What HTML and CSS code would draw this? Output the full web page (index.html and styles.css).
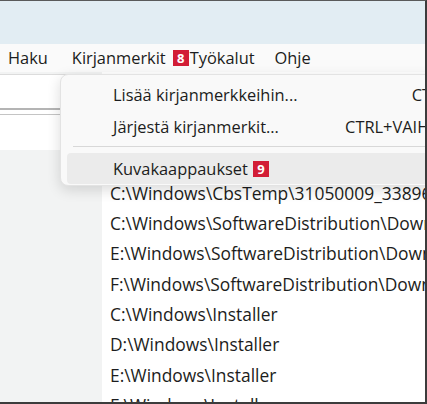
FILE: index.html
```html
<!DOCTYPE html>
<html lang="fi">
<head>
<meta charset="utf-8">
<title>Kirjanmerkit</title>
<link rel="stylesheet" href="styles.css">
</head>
<body>
<div class="window">
  <div class="titlebar"></div>
  <div class="menubar">
    <span class="menu-item">Haku</span>
    <span class="menu-item active">Kirjanmerkit</span>
    <span class="badge menu-badge">8</span>
    <span class="menu-item tools">Työkalut</span>
    <span class="menu-item help">Ohje</span>
  </div>
  <div class="main">
    <div class="side">
      <div class="field"></div>
      <div class="field-gap"></div>
      <div class="side-white"></div>
      <div class="side-gray"></div>
    </div>
    <div class="list">
      <div class="row">C:\Windows\Temp\Downloads</div>
      <div class="row">C:\Windows\Logs\CBS</div>
      <div class="row">C:\Windows\WinSxS\Backup</div>
      <div class="row">C:\Windows\CbsTemp\31050009_3389601</div>
      <div class="row">C:\Windows\SoftwareDistribution\Download</div>
      <div class="row">E:\Windows\SoftwareDistribution\Download</div>
      <div class="row">F:\Windows\SoftwareDistribution\Download</div>
      <div class="row">C:\Windows\Installer</div>
      <div class="row">D:\Windows\Installer</div>
      <div class="row">E:\Windows\Installer</div>
      <div class="row">F:\Windows\Installer</div>
    </div>
  </div>
  <div class="dropdown">
    <div class="dd-item"><span class="dd-label">Lisää kirjanmerkkeihin...</span><span class="dd-key">CTRL+D</span></div>
    <div class="dd-item"><span class="dd-label">Järjestä kirjanmerkit...</span><span class="dd-key">CTRL+VAIHTO+B</span></div>
    <div class="dd-sep"></div>
    <div class="dd-item hot"><span class="dd-label">Kuvakaappaukset</span><span class="badge">9</span></div>
  </div>
</div>
</body>
</html>
```

FILE: styles.css
```css
html, body {
  margin: 0;
  padding: 0;
}
body {
  width: 427px;
  height: 404px;
  overflow: hidden;
  font-family: "Open Sans", "Noto Sans", "Liberation Sans", sans-serif;
  color: #1c1d20;
  background: #f2f3f3;
}
.window {
  position: relative;
  width: 427px;
  height: 404px;
  border-top: 1px solid #5a5a5a;
  border-right: 2px solid #3c3c3c;
  border-bottom: 2px solid #3c3c3c;
  box-sizing: border-box;
  overflow: hidden;
  background: #f2f3f3;
}
.titlebar {
  height: 43px;
  background: #e2edf3;
}
.menubar {
  height: 28px;
  background: #fafafa;
  display: flex;
  align-items: center;
  font-size: 16.4px;
  padding-left: 8px;
}
.menu-item {
  height: 28px;
  line-height: 27px;
}
.menu-item.active {
  margin-left: 24px;
}
.menu-badge {
  margin-left: 7px;
}
.menu-item.tools {
  margin-left: 1px;
}
.menu-item.help {
  margin-left: 20px;
}
.badge {
  display: inline-block;
  flex: none;
  width: 16px;
  height: 16px;
  background: #d21d36;
  color: #fff;
  font-weight: 700;
  font-size: 13px;
  line-height: 16px;
  text-align: center;
  font-family: "Open Sans", "Liberation Sans", sans-serif;
}
.main {
  display: flex;
  height: 332px;
}
.side {
  width: 102px;
  display: flex;
  flex-direction: column;
  flex: none;
}
.field {
  height: 33px;
  background: #fff;
  border-top: 1px solid #dcdcdc;
  border-bottom: 2px solid #b4b4b4;
  margin-top: 2px;
}
.field-gap {
  height: 4px;
  background: #fff;
  border-bottom: 1px solid #c4c4c4;
}
.side-white {
  height: 35px;
  background: #fff;
}
.side-gray {
  flex: 1;
  background: #f2f3f3;
}
.list {
  flex: 1;
  background: #fff;
  padding-top: 15px;
  padding-left: 8px;
  font-size: 17.4px;
  white-space: nowrap;
  overflow: hidden;
}
.row {
  height: 30.3px;
  line-height: 30.3px;
}
.dropdown {
  position: absolute;
  left: 60px;
  top: 73px;
  width: 420px;
  height: 112px;
  background: #f9f9f9;
  border: 1px solid #e3e3e3;
  border-radius: 8px;
  box-shadow: 0 4px 14px rgba(0,0,0,0.14);
  box-sizing: border-box;
  padding: 3px 0 0 6px;
  font-size: 16.4px;
}
.dd-item {
  height: 32px;
  display: flex;
  align-items: center;
  padding-left: 46px;
  border-radius: 4px;
}
.dd-label {
  width: 229px;
  flex: none;
}
.dd-key {
  white-space: nowrap;
  width: 129px;
  flex: none;
  text-align: right;
}
.dd-sep {
  height: 1px;
  background: #d8d8d8;
  margin: 4px 0 6px 6px;
}
.dd-item.hot {
  background: #ebebeb;
  height: 31px;
}
.dd-item.hot .dd-label {
  width: auto;
  margin-right: 5px;
}
```
